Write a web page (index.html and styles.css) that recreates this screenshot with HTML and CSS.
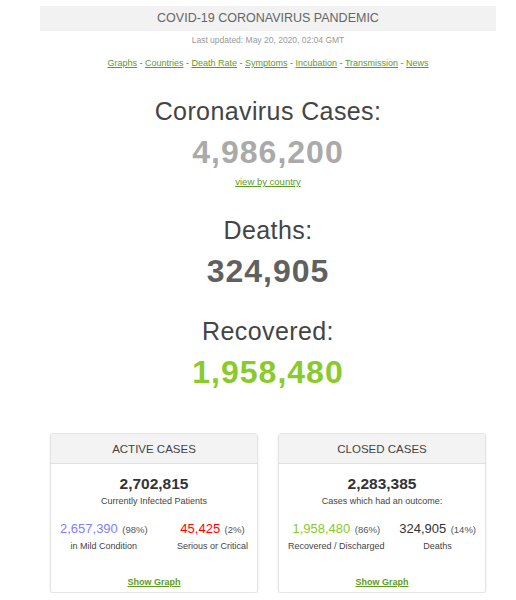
FILE: index.html
```html
<!DOCTYPE html>
<html>
  <head>
    <link rel="stylesheet" href="styles.css">
  </head>
  <body>
    <div class="page">
      <div class="title-bar">COVID-19 Coronavirus Pandemic</div>
      <div class="updated">Last updated: May 20, 2020, 02:04 GMT</div>
      <div class="nav-links">
        <a href="#">Graphs</a> - <a href="#">Countries</a> - <a href="#">Death Rate</a> -
        <a href="#">Symptoms</a> - <a href="#">Incubation</a> - <a href="#">Transmission</a> -
        <a href="#">News</a>
      </div>

      <div class="counter">
        <h1 class="counter-label">Coronavirus Cases:</h1>
        <div class="counter-number cases">4,986,200</div>
        <a class="country-link" href="#">view by country</a>
      </div>

      <div class="counter">
        <h1 class="counter-label">Deaths:</h1>
        <div class="counter-number deaths">324,905</div>
      </div>

      <div class="counter">
        <h1 class="counter-label">Recovered:</h1>
        <div class="counter-number recovered">1,958,480</div>
      </div>

      <div class="panels">
        <div class="panel">
          <div class="panel-heading">Active Cases</div>
          <div class="panel-body">
            <div class="panel-total">2,702,815</div>
            <div class="panel-caption">Currently Infected Patients</div>
            <div class="split">
              <div class="split-col">
                <span class="split-number mild">2,657,390</span> <span class="pct">(98%)</span>
                <div class="panel-caption">in Mild Condition</div>
              </div>
              <div class="split-col">
                <span class="split-number critical">45,425</span> <span class="pct">(2%)</span>
                <div class="panel-caption">Serious or Critical</div>
              </div>
            </div>
            <a class="graph-link" href="#">Show Graph</a>
          </div>
        </div>

        <div class="panel">
          <div class="panel-heading">Closed Cases</div>
          <div class="panel-body">
            <div class="panel-total">2,283,385</div>
            <div class="panel-caption">Cases which had an outcome:</div>
            <div class="split">
              <div class="split-col">
                <span class="split-number discharged">1,958,480</span> <span class="pct">(86%)</span>
                <div class="panel-caption">Recovered / Discharged</div>
              </div>
              <div class="split-col">
                <span class="split-number">324,905</span> <span class="pct">(14%)</span>
                <div class="panel-caption">Deaths</div>
              </div>
            </div>
            <a class="graph-link" href="#">Show Graph</a>
          </div>
        </div>
      </div>
    </div>
  </body>
</html>
```

FILE: styles.css
```css
* {
  box-sizing: border-box;
}
body {
  margin: 0;
  background-color: #fff;
  font-family: "Liberation Sans", Arial, sans-serif;
  color: #333;
}
a {
  color: #609b1f;
}

.page {
  width: 456px;
  margin-left: 40px;
  padding-top: 6px;
  text-align: center;
}

.title-bar {
  height: 25px;
  line-height: 25px;
  background-color: #f2f2f2;
  color: #666;
  font-size: 12.5px;
  text-transform: uppercase;
}
.updated {
  margin-top: 2px;
  font-size: 8.5px;
  line-height: 14px;
  color: #999;
}
.nav-links {
  margin-top: 9px;
  font-size: 9px;
  line-height: 14px;
  color: #666;
}

.counter {
  margin-top: 26px;
}
.counter-label {
  margin: 0;
  font-size: 25px;
  font-weight: normal;
  line-height: 30px;
  letter-spacing: 0.4px;
  color: #444;
}
.counter-number {
  margin-top: 7px;
  font-size: 32px;
  font-weight: bold;
  line-height: 38px;
  letter-spacing: 1px;
}
.cases {
  color: #aaa;
}
.deaths {
  color: #606060;
}
.recovered {
  color: #8aca2b;
}
.country-link {
  display: inline-block;
  margin-top: 4px;
  font-size: 9.5px;
  line-height: 14px;
}

.panels {
  display: flex;
  gap: 20px;
  margin-top: 42px;
  padding: 0 10px;
}
.panel {
  display: flex;
  flex-direction: column;
  flex: 1;
  height: 160px;
  border: 1px solid #e4e4e4;
  border-radius: 3px;
  box-shadow: 0 1px 2px rgba(0, 0, 0, 0.12);
}
.panel-heading {
  height: 30px;
  line-height: 30px;
  background-color: #f3f3f3;
  border-bottom: 1px solid #e0e0e0;
  font-size: 11.5px;
  color: #444;
  text-transform: uppercase;
}
.panel-body {
  display: flex;
  flex-direction: column;
  flex: 1;
  padding: 11px 9px 4px;
}
.panel-total {
  font-size: 15.5px;
  font-weight: bold;
  line-height: 18px;
  color: #333;
}
.panel-caption {
  margin-top: 2px;
  font-size: 9px;
  line-height: 12px;
  color: #444;
}
.split {
  display: flex;
  justify-content: space-between;
  margin-top: 13px;
}
.split-col {
  line-height: 16px;
}
.split-number {
  font-size: 13px;
  color: #333;
}
.pct {
  font-size: 9.5px;
  color: #555;
}
.mild {
  color: #8080ff;
}
.critical {
  color: #f00;
}
.discharged {
  color: #8aca2b;
}
.graph-link {
  margin-top: auto;
  align-self: center;
  font-size: 9px;
  font-weight: bold;
  line-height: 12px;
}
```
